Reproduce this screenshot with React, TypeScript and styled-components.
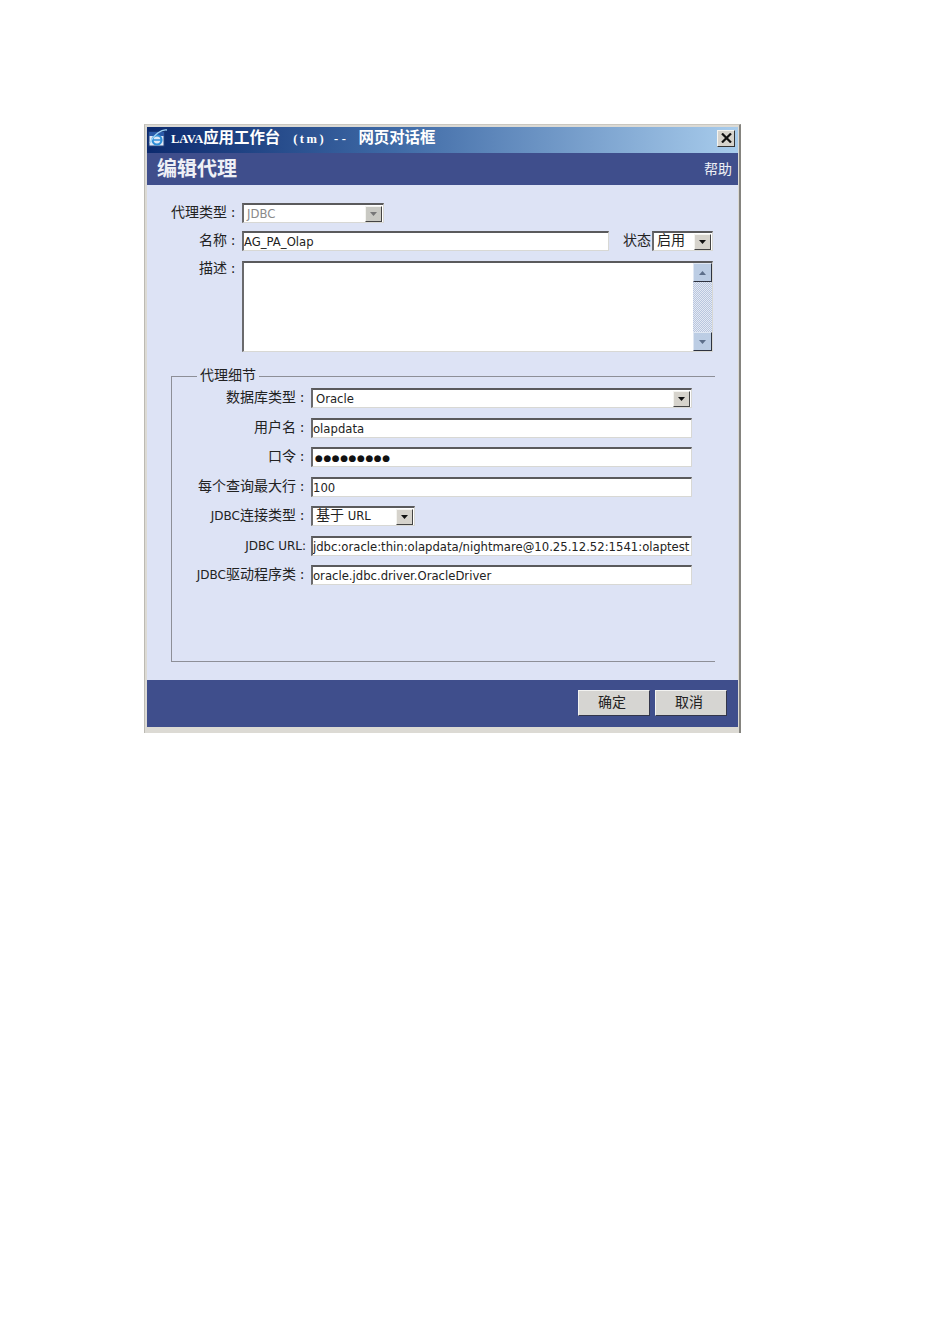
import React from "react";
import styled, { createGlobalStyle } from "styled-components";

const GlobalStyle = createGlobalStyle`
  html, body {
    margin: 0;
    padding: 0;
    background: #fff;
  }
  body {
    font-family: "DejaVu Sans", "Noto Sans CJK SC", sans-serif;
    color: #222;
  }
`;

const cjk = `"Noto Sans CJK SC", sans-serif`;
const latin = `"DejaVu Sans", "Noto Sans CJK SC", sans-serif`;

const Arrow: React.FC<{ up?: boolean; color?: string }> = ({ up, color = "#111" }) => (
  <svg width="7" height="4" viewBox="0 0 7 4">
    <polygon points={up ? "3.5,0 7,4 0,4" : "0,0 7,0 3.5,4"} fill={color} />
  </svg>
);

const DialogIcon = () => (
  <svg width="20" height="20" viewBox="0 0 20 20">
    <rect x="1" y="4" width="15" height="14" fill="#dfe8f6" stroke="#24427c" />
    <rect x="1" y="4" width="15" height="4" fill="#2b5aa8" />
    <circle cx="9" cy="12" r="4.5" fill="none" stroke="#2f8fd8" strokeWidth="2.2" />
    <path d="M5 12h8" stroke="#2f8fd8" strokeWidth="1.5" />
    <path d="M2 15C6 6 14 1 19 2" fill="none" stroke="#9fd4f4" strokeWidth="1.4" />
  </svg>
);

const CloseIcon = () => (
  <svg width="11" height="10" viewBox="0 0 11 10">
    <path d="M1 0.5 L10 9.5 M10 0.5 L1 9.5" stroke="#111" strokeWidth="2.2" />
  </svg>
);

const Page = styled.div`
  width: 950px;
  height: 1344px;
  padding: 124px 0 0 144px;
  box-sizing: border-box;
  background: #fff;
`;

const Window = styled.div`
  width: 597px;
  height: 609px;
  box-sizing: border-box;
  display: flex;
  flex-direction: column;
  background: #dcdad4;
  border-top: 1px solid #c9c7c0;
  border-left: 1px solid #bcbab3;
  border-right: 2px solid #85847f;
  padding: 2px 1px 6px 2px;
`;

const TitleBar = styled.div`
  height: 26px;
  flex: none;
  display: flex;
  align-items: center;
  box-sizing: border-box;
  padding: 0 3px 4px 1px;
  background: linear-gradient(90deg, #0c2a6e 0%, #3f6aa6 42%, #a8ccec 100%);
`;

const TitleText = styled.span`
  flex: 1;
  margin: 0 0 2px 3px;
  color: #fff;
  font: bold 15.4px/18px ${cjk};
  white-space: pre;
`;

const TitleLatin = styled.span<{ $spacing?: number; $left?: number }>`
  margin-left: ${(p) => p.$left ?? 0}px;
  font: bold 12.5px "Liberation Serif", serif;
  letter-spacing: ${(p) => p.$spacing ?? 0}px;
`;

const TitleCjk = styled.span<{ $left?: number }>`
  margin-left: ${(p) => p.$left ?? 0}px;
`;

const CloseButton = styled.div`
  width: 18px;
  height: 17px;
  display: flex;
  align-items: center;
  justify-content: center;
  background: #d6d3cc;
  border: 1px solid;
  border-color: #f4f4f0 #333 #333 #f4f4f0;
  box-sizing: border-box;
`;

const HeaderBar = styled.div`
  height: 32px;
  flex: none;
  display: flex;
  align-items: center;
  justify-content: space-between;
  box-sizing: border-box;
  padding: 0 6px 3px 10px;
  background: #3f4e8c;
  color: #eef0f6;
`;

const HeaderTitle = styled.span`
  font: bold 20px ${cjk};
`;

const HelpLink = styled.span`
  font: 14px ${cjk};
`;

const Body = styled.div`
  flex: 1;
  min-height: 0;
  display: flex;
  flex-direction: column;
  background: #dde3f5;
  padding: 18px 23px 18px 23px;
  box-sizing: border-box;
`;

const Row = styled.div<{ $gap?: number }>`
  display: flex;
  align-items: center;
  margin-bottom: ${(p) => p.$gap ?? 9.5}px;
`;

const TopRow = styled(Row)`
  align-items: flex-start;
`;

const Label = styled.label<{ $width: number }>`
  width: ${(p) => p.$width}px;
  height: 16px;
  flex: none;
  margin: 0 5px 4px 0;
  text-align: right;
  font: 14px/16px ${cjk};
  color: #222;
  white-space: nowrap;
`;

const TopLabel = styled(Label)`
  height: 12px;
  line-height: 12px;
`;

const LabelLatin = styled.span`
  font: 12px/16px ${latin};
`;

const Colon = styled.span`
  display: inline-block;
  width: 10px;
  box-sizing: border-box;
  padding-left: 2px;
  text-align: center;
  font: 14px/12px ${latin};
`;

const StatusLabel = styled.span`
  margin: 0 1px 4px 14px;
  font: 14px/16px ${cjk};
  color: #222;
`;

const Sunken = styled.div<{ $width: number; $height?: number; $muted?: boolean }>`
  width: ${(p) => p.$width}px;
  height: ${(p) => p.$height ?? 20}px;
  flex: none;
  box-sizing: border-box;
  display: flex;
  align-items: center;
  background: #fff;
  border-style: solid;
  border-width: 2px 1px 1px 2px;
  border-color: #5a5a5c #d8d8d4 #d8d8d4 #6a6a6c;
  color: ${(p) => (p.$muted ? "#8a8a8a" : "#222")};
`;

const Input = styled.input`
  flex: 1;
  width: 100%;
  min-width: 0;
  border: 0;
  outline: 0;
  padding: 1px 0 0 0;
  background: transparent;
  color: inherit;
  font: 11.65px ${latin};
`;

const Dots = styled.span`
  padding-left: 2px;
  font: bold 9px ${latin};
  letter-spacing: 0.55px;
  color: #111;
`;

const SelectValue = styled.span`
  flex: 1;
  padding: 1px 0 0 3px;
  font: 11.65px ${latin};
  color: inherit;
  white-space: nowrap;
`;

const CjkSelectValue = styled(SelectValue)`
  padding: 0 0 3px 3px;
`;

const SelectCjk = styled.span`
  font: 14px/15px ${cjk};
`;

const SelectButton = styled.div<{ $muted?: boolean }>`
  width: 17px;
  height: 16px;
  flex: none;
  margin-right: 1px;
  display: flex;
  align-items: center;
  justify-content: center;
  box-sizing: border-box;
  background: ${(p) => (p.$muted ? "#c9c9c3" : "#d6d3cc")};
  border: 1px solid;
  border-color: #f4f4f0 #444 #444 #f4f4f0;
`;

const TextArea = styled.textarea`
  flex: 1;
  min-width: 0;
  height: 100%;
  box-sizing: border-box;
  border: 0;
  outline: 0;
  resize: none;
  padding: 0;
  background: transparent;
`;

const ScrollBar = styled.div`
  width: 19px;
  height: 100%;
  flex: none;
  display: flex;
  flex-direction: column;
  justify-content: space-between;
  background: repeating-conic-gradient(#b8c6de 0% 25%, #e4e9f4 0% 50%) 0 0 / 2px 2px;
`;

const ScrollButton = styled.div`
  width: 19px;
  height: 19px;
  display: flex;
  align-items: center;
  justify-content: center;
  box-sizing: border-box;
  background: #bccde4;
  border: 1px solid;
  border-color: #dfe7f3 #2e3340 #2e3340 #dfe7f3;
`;

const Details = styled.fieldset`
  margin: 14px 0 0 1px;
  padding: 2px 0 0 0;
  width: 544px;
  height: 296px;
  box-sizing: border-box;
  border: 0;
  border-top: 1px solid #8d8f97;
  border-left: 1px solid #8d8f97;
  border-bottom: 1px solid #8d8f97;
  min-width: 0;
`;

const DetailsLegend = styled.legend`
  margin-left: 25px;
  padding: 0 3px 4px;
  font: 14px/16px ${cjk};
  color: #222;
`;

const Footer = styled.div`
  height: 47px;
  flex: none;
  display: flex;
  align-items: center;
  justify-content: flex-end;
  gap: 5px;
  padding: 0 11px 2px 0;
  box-sizing: border-box;
  background: #3f4e8c;
`;

const Button = styled.button`
  width: 72px;
  height: 26px;
  padding: 0 4px 3px 0;
  box-sizing: border-box;
  background: #d6d5d2;
  border: 1px solid;
  border-color: #f2f2f0 #33364a #33364a #f2f2f0;
  font: 14px ${cjk};
  color: #222;
`;

export default function App() {
  return (
    <Page>
      <GlobalStyle />
      <Window>
        <TitleBar>
          <DialogIcon />
          <TitleText>
            <TitleLatin>LAVA</TitleLatin>应用工作台
            <TitleLatin $left={13} $spacing={2.5}>(tm)</TitleLatin>
            <TitleLatin $left={8} $spacing={3.5}>--</TitleLatin>
            <TitleCjk $left={9}>网页对话框</TitleCjk>
          </TitleText>
          <CloseButton>
            <CloseIcon />
          </CloseButton>
        </TitleBar>
        <HeaderBar>
          <HeaderTitle>编辑代理</HeaderTitle>
          <HelpLink>帮助</HelpLink>
        </HeaderBar>
        <Body>
          <Row $gap={8}>
            <Label $width={67}>代理类型<Colon>:</Colon></Label>
            <Sunken $width={142} $muted>
              <SelectValue>JDBC</SelectValue>
              <SelectButton $muted>
                <Arrow color="#777" />
              </SelectButton>
            </Sunken>
          </Row>
          <Row $gap={10}>
            <Label $width={67}>名称<Colon>:</Colon></Label>
            <Sunken $width={367}>
              <Input defaultValue="AG_PA_Olap" />
            </Sunken>
            <StatusLabel>状态</StatusLabel>
            <Sunken $width={61}>
              <CjkSelectValue>
                <SelectCjk>启用</SelectCjk>
              </CjkSelectValue>
              <SelectButton>
                <Arrow />
              </SelectButton>
            </Sunken>
          </Row>
          <TopRow $gap={0}>
            <TopLabel $width={67}>描述<Colon>:</Colon></TopLabel>
            <Sunken $width={471} $height={91}>
              <TextArea />
              <ScrollBar>
                <ScrollButton>
                  <Arrow up color="#5d6f8a" />
                </ScrollButton>
                <ScrollButton>
                  <Arrow color="#5d6f8a" />
                </ScrollButton>
              </ScrollBar>
            </Sunken>
          </TopRow>
          <Details>
            <DetailsLegend>代理细节</DetailsLegend>
            <Row>
              <Label $width={134}>数据库类型<Colon>:</Colon></Label>
              <Sunken $width={381}>
                <SelectValue>Oracle</SelectValue>
                <SelectButton>
                  <Arrow />
                </SelectButton>
              </Sunken>
            </Row>
            <Row>
              <Label $width={134}>用户名<Colon>:</Colon></Label>
              <Sunken $width={381}>
                <Input defaultValue="olapdata" />
              </Sunken>
            </Row>
            <Row>
              <Label $width={134}>口令<Colon>:</Colon></Label>
              <Sunken $width={381}>
                <Dots>●●●●●●●●●</Dots>
              </Sunken>
            </Row>
            <Row>
              <Label $width={134}>每个查询最大行<Colon>:</Colon></Label>
              <Sunken $width={381}>
                <Input defaultValue="100" />
              </Sunken>
            </Row>
            <Row>
              <Label $width={134}><LabelLatin>JDBC</LabelLatin>连接类型<Colon>:</Colon></Label>
              <Sunken $width={104}>
                <CjkSelectValue>
                  <SelectCjk>基于</SelectCjk> URL
                </CjkSelectValue>
                <SelectButton>
                  <Arrow />
                </SelectButton>
              </Sunken>
            </Row>
            <Row>
              <Label $width={134}><LabelLatin>JDBC URL:</LabelLatin></Label>
              <Sunken $width={381}>
                <Input defaultValue="jdbc:oracle:thin:olapdata/nightmare@10.25.12.52:1541:olaptest" />
              </Sunken>
            </Row>
            <Row $gap={0}>
              <Label $width={134}><LabelLatin>JDBC</LabelLatin>驱动程序类<Colon>:</Colon></Label>
              <Sunken $width={381}>
                <Input defaultValue="oracle.jdbc.driver.OracleDriver" />
              </Sunken>
            </Row>
          </Details>
        </Body>
        <Footer>
          <Button>确定</Button>
          <Button>取消</Button>
        </Footer>
      </Window>
    </Page>
  );
}
